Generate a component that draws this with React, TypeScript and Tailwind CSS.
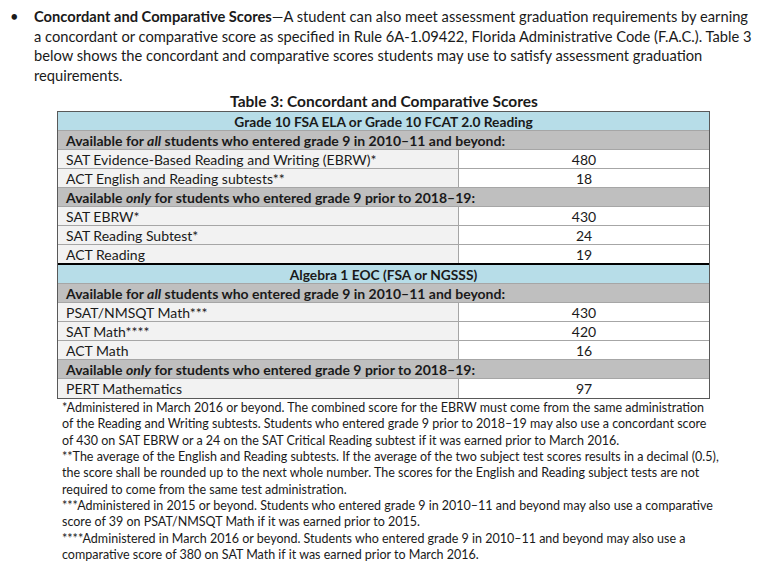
import React from 'react'

type Row =
  | { kind: 'head'; text: string }
  | { kind: 'sub'; pre: string; em: string; post: string }
  | { kind: 'data'; label: string; value: string; thick?: boolean }

const ROWS: Row[] = [
  { kind: 'head', text: 'Grade 10 FSA ELA or Grade 10 FCAT 2.0 Reading' },
  { kind: 'sub', pre: 'Available for ', em: 'all', post: ' students who entered grade 9 in 2010–11 and beyond:' },
  { kind: 'data', label: 'SAT Evidence-Based Reading and Writing (EBRW)*', value: '480' },
  { kind: 'data', label: 'ACT English and Reading subtests**', value: '18' },
  { kind: 'sub', pre: 'Available ', em: 'only', post: ' for students who entered grade 9 prior to 2018–19:' },
  { kind: 'data', label: 'SAT EBRW*', value: '430' },
  { kind: 'data', label: 'SAT Reading Subtest*', value: '24' },
  { kind: 'data', label: 'ACT Reading', value: '19', thick: true },
  { kind: 'head', text: 'Algebra 1 EOC (FSA or NGSSS)' },
  { kind: 'sub', pre: 'Available for ', em: 'all', post: ' students who entered grade 9 in 2010–11 and beyond:' },
  { kind: 'data', label: 'PSAT/NMSQT Math***', value: '430' },
  { kind: 'data', label: 'SAT Math****', value: '420' },
  { kind: 'data', label: 'ACT Math', value: '16' },
  { kind: 'sub', pre: 'Available ', em: 'only', post: ' for students who entered grade 9 prior to 2018–19:' },
  { kind: 'data', label: 'PERT Mathematics', value: '97' },
]

const INTRO = [
  'a concordant or comparative score as specified in Rule 6A-1.09422, Florida Administrative Code (F.A.C.). Table 3',
  'below shows the concordant and comparative scores students may use to satisfy assessment graduation',
  'requirements.',
]

const NOTES = [
  '*Administered in March 2016 or beyond. The combined score for the EBRW must come from the same administration',
  'of the Reading and Writing subtests. Students who entered grade 9 prior to 2018–19 may also use a concordant score',
  'of 430 on SAT EBRW or a 24 on the SAT Critical Reading subtest if it was earned prior to March 2016.',
  '**The average of the English and Reading subtests. If the average of the two subject test scores results in a decimal (0.5),',
  'the score shall be rounded up to the next whole number. The scores for the English and Reading subject tests are not',
  'required to come from the same test administration.',
  '***Administered in 2015 or beyond. Students who entered grade 9 in 2010–11 and beyond may also use a comparative',
  'score of 39 on PSAT/NMSQT Math if it was earned prior to 2015.',
  '****Administered in March 2016 or beyond. Students who entered grade 9 in 2010–11 and beyond may also use a',
  'comparative score of 380 on SAT Math if it was earned prior to March 2016.',
]

function TableRow({ row, last }: { row: Row; last: boolean }) {
  const edge = last ? '' : 'border-b border-[#a6a6a6]'
  if (row.kind === 'head') {
    return (
      <div className={`h-[19px] box-border flex items-center justify-center bg-[#b7dde8] font-bold text-[13.75px] ${edge}`}>
        {row.text}
      </div>
    )
  }
  if (row.kind === 'sub') {
    return (
      <div className={`h-[19px] box-border flex items-center pl-[8px] bg-[#bfbfbf] font-bold text-[14px] ${edge}`}>
        <span className="whitespace-pre">
          {row.pre}
          <em>{row.em}</em>
          {row.post}
        </span>
      </div>
    )
  }
  return (
    <div
      className={`box-border flex ${row.thick ? 'h-[20px] border-b-2 border-black' : `h-[19px] ${edge}`}`}
    >
      <div className="w-[401px] shrink-0 flex items-center pl-[8px] bg-[#f2f2f2] border-r border-[#a6a6a6]">
        {row.label}
      </div>
      <div className="flex-1 flex items-center justify-center bg-white">{row.value}</div>
    </div>
  )
}

export default function App() {
  return (
    <div className="w-[768px] h-[573px] bg-white text-[#1a1a1a] font-['Lato','Liberation_Sans',sans-serif] overflow-hidden">
      <div className="pt-[7px] flex text-[14.7px] leading-[19.5px]">
        <div className="w-[34px] shrink-0 pl-[10px]">•</div>
        <div className="whitespace-nowrap">
          <div>
            <span className="font-bold">Concordant and Comparative Scores</span>—A student can also meet assessment
            graduation requirements by earning
          </div>
          {INTRO.map((line) => (
            <div key={line}>{line}</div>
          ))}
        </div>
      </div>

      <div className="mt-[7px] text-center font-bold text-[15.5px] leading-[19px]">
        Table 3: Concordant and Comparative Scores
      </div>

      <div className="ml-[57px] w-[653px] border border-[#595959] text-[14px] leading-[19px]">
        {ROWS.map((row, i) => (
          <TableRow key={i} row={row} last={i === ROWS.length - 1} />
        ))}
      </div>

      <div className="pt-[1px] pl-[62px] text-[12.5px] leading-[16.33px] whitespace-nowrap">
        {NOTES.map((line) => (
          <div key={line}>{line}</div>
        ))}
      </div>
    </div>
  )
}
